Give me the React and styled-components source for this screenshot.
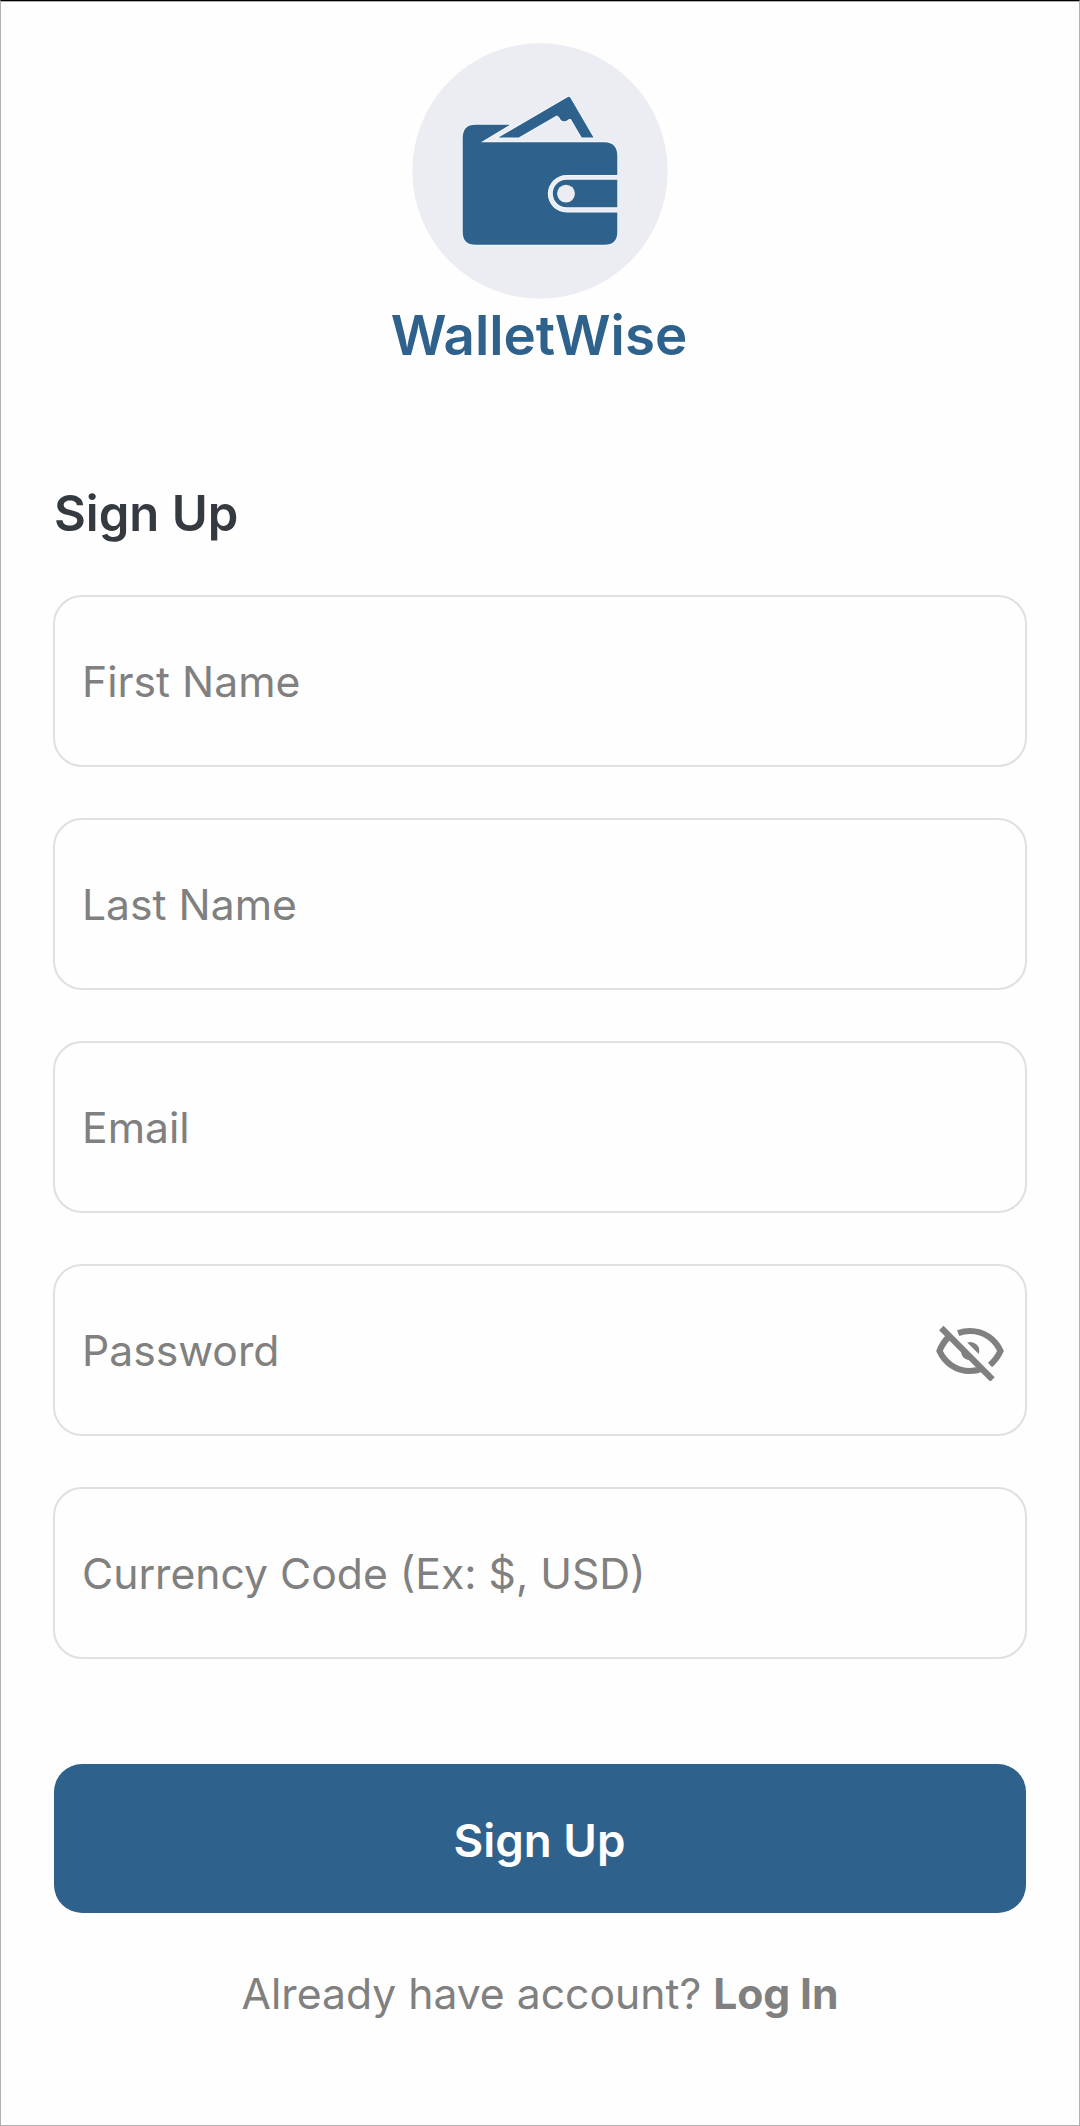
import React, { useState } from "react";
import styled, { createGlobalStyle } from "styled-components";

const GlobalStyle = createGlobalStyle`
  * { box-sizing: border-box; }
  body { margin: 0; background: #fefefe; }
  input, button { font-family: inherit; }
`;

const Screen = styled.main`
  display: flex;
  flex-direction: column;
  width: 1080px;
  height: 2126px;
  padding: 42px 52px 0;
  border: 1px solid #b0b0b0;
  border-top-color: #000;
  box-shadow: inset 0 1px #b0b0b0;
  background: #fefefe;
  color: #808080;
  font-family: Inter, "Liberation Sans", sans-serif;
`;

const Brand = styled.header`
  display: flex;
  flex-direction: column;
  align-items: center;
`;

const Logo = styled.svg`
  display: block;
  width: 256px;
  height: 256px;
`;

const BrandName = styled.h1`
  margin: 3px 0 0;
  padding-right: 2px;
  color: #2e618b;
  font-size: 54.7px;
  font-weight: 600;
  line-height: 66px;
`;

const Title = styled.h2`
  margin: 116px 0 0;
  padding-left: 1px;
  color: #343a40;
  font-size: 49px;
  font-weight: 600;
  line-height: 60px;
`;

const Form = styled.form`
  display: flex;
  flex-direction: column;
`;

const Fields = styled.div`
  display: flex;
  flex-direction: column;
  gap: 51px;
  margin-top: 51px;
`;

const Field = styled.label`
  display: flex;
  align-items: center;
  height: 172px;
  padding: 0 20px 0 27px;
  border: 2px solid #e0e0e0;
  border-radius: 29px;
`;

const Input = styled.input`
  flex: 1;
  min-width: 0;
  padding: 2px 0 0;
  border: 0;
  outline: 0;
  background: transparent;
  color: #343a40;
  font-size: 42.67px;
  line-height: 52px;

  &::placeholder {
    color: #808080;
    opacity: 1;
  }
`;

const IconButton = styled.button`
  display: flex;
  padding: 2px 0 0;
  border: 0;
  background: none;
  color: #808080;
`;

const SubmitButton = styled.button`
  height: 149px;
  margin: 105.4px 1px 0;
  padding: 3px 1px 0 0;
  border: 0;
  border-radius: 28px;
  background: #2e618b;
  color: #fefefe;
  font-size: 45.7px;
  font-weight: 600;
`;

const Prompt = styled.p`
  margin: 54.6px 0 0;
  font-size: 42.67px;
  line-height: 52px;
  text-align: center;
`;

const LogIn = styled.a`
  font-weight: 700;
  letter-spacing: -0.1px;
`;

const WalletLogo = () => (
  <Logo viewBox="412 43 256 256" aria-hidden="true">
    <circle cx="540" cy="171" r="127.7" fill="#ecedf3" />
    <g fill="#2e618b" stroke="#f0f8ff" strokeWidth="2" paintOrder="stroke">
      <path d="M475.5 124.7H510L481 142.3H604.5Q617.3 142.5 617.3 156V175H566.5A18.7 18.7 0 0 0 566.5 212.4H617.3V232Q617.3 244.7 604.5 244.7H475.5Q462.7 244.7 462.7 232V138Q462.7 124.7 475.5 124.7Z" />
      <path d="M498.5 137.5L567.5 97.2Q569.3 96 570.5 98L593.5 137.5H581.7L571 119.3C568.5 117.8 568 121.3 564 121.3C559.5 121.3 560.5 116.8 556.7 115.6L518.7 137.5Z" />
      <path d="M617.3 179.8H566.5A13.7 13.7 0 0 0 566.5 207.2H617.3Z" />
    </g>
    <circle cx="566" cy="193.6" r="8.9" fill="#ecedf3" />
  </Logo>
);

const EyeOffIcon = () => (
  <svg width="70" height="60" viewBox="935 1321 70 60" fill="none" stroke="currentColor" strokeWidth="6.2" aria-hidden="true">
    <path d="M958.2 1333.2C962 1331.7 966 1331 970 1331C984 1331 995 1339 1000.5 1351C998 1356.5 994.5 1361 990 1365" />
    <path d="M949 1336.5Q942.5 1343 939.5 1351C945 1363 956 1371 970 1371Q976.5 1371 982 1368.7" />
    <path d="M941.3 1328L992.5 1379.5" />
    <path d="M967.2 1342.5A9 9 0 0 1 978.7 1354Z" fill="currentColor" stroke="none" />
    <path d="M961.3 1349A9 9 0 0 0 972 1360Z" fill="currentColor" stroke="none" />
  </svg>
);

const fields = [
  { name: "firstName", label: "First Name" },
  { name: "lastName", label: "Last Name" },
  { name: "email", label: "Email" },
  { name: "password", label: "Password", secret: true },
  { name: "currency", label: "Currency Code (Ex: $, USD)" },
];

export default function App() {
  const [hidden, setHidden] = useState(true);
  return (
    <>
      <GlobalStyle />
      <Screen>
        <Brand>
          <WalletLogo />
          <BrandName>WalletWise</BrandName>
        </Brand>
        <Title>Sign Up</Title>
        <Form onSubmit={(e) => e.preventDefault()}>
          <Fields>
            {fields.map(({ name, label, secret }) => (
              <Field key={name}>
                <Input name={name} placeholder={label} type={secret && hidden ? "password" : "text"} />
                {secret && (
                  <IconButton type="button" aria-label="Toggle password" onClick={() => setHidden(!hidden)}>
                    <EyeOffIcon />
                  </IconButton>
                )}
              </Field>
            ))}
          </Fields>
          <SubmitButton type="submit">Sign Up</SubmitButton>
        </Form>
        <Prompt>
          Already have account? <LogIn>Log In</LogIn>
        </Prompt>
      </Screen>
    </>
  );
}
